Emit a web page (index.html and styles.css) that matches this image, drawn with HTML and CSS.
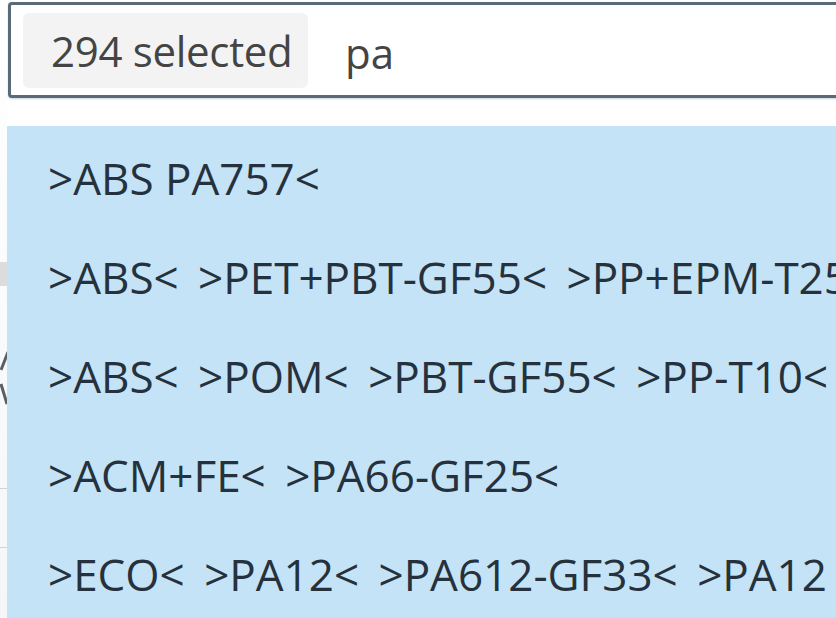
FILE: index.html
```html
<!DOCTYPE html>
<html>
<head>
<meta charset="utf-8">
<link rel="stylesheet" href="styles.css">
</head>
<body>
<div class="page">
  <div class="gutter">
    <div class="g-block"></div>
    <div class="g-chevron">
      <svg width="8" height="60" viewBox="0 0 8 60"><path d="M8 4 L1 22 M1 36 L7 56" stroke="#5a6068" stroke-width="3" fill="none"/></svg>
    </div>
    <div class="g-line g-line1"></div>
    <div class="g-line g-line2"></div>
  </div>
  <div class="main">
    <div class="field">
      <span class="chip">294 selected</span>
      <span class="query">pa</span>
    </div>
    <ul class="dropdown">
      <li class="opt opt-single">&gt;ABS PA757&lt;</li>
      <li class="opt">&gt;ABS&lt; &gt;PET+PBT-GF55&lt; &gt;PP+EPM-T25&lt;</li>
      <li class="opt">&gt;ABS&lt; &gt;POM&lt; &gt;PBT-GF55&lt; &gt;PP-T10&lt;</li>
      <li class="opt">&gt;ACM+FE&lt; &gt;PA66-GF25&lt;</li>
      <li class="opt">&gt;ECO&lt; &gt;PA12&lt; &gt;PA612-GF33&lt; &gt;PA12 PA&lt;</li>
    </ul>
  </div>
</div>
</body>
</html>
```

FILE: styles.css
```css
html, body {
  margin: 0;
  padding: 0;
  background: #ffffff;
  overflow: hidden;
  width: 836px;
  height: 618px;
}

.page {
  display: flex;
  width: 836px;
  height: 618px;
  overflow: hidden;
  font-family: "Open Sans", "Noto Sans", sans-serif;
}

.gutter {
  width: 7px;
  flex: 0 0 7px;
  display: flex;
  flex-direction: column;
  background: linear-gradient(#ffffff, #f4f6f8);
}

.g-block {
  margin-top: 262px;
  height: 24px;
  background: #dcdcdc;
}

.g-chevron {
  margin-top: 62px;
  height: 60px;
}

.g-line {
  height: 1px;
  background: #cfd4d8;
}

.g-line1 { margin-top: 80px; }
.g-line2 { margin-top: 58px; }

.main {
  flex: 1 0 auto;
  width: 900px;
  display: flex;
  flex-direction: column;
  overflow: hidden;
}

.field {
  flex: 0 0 auto;
  box-sizing: border-box;
  margin: 2px 0 0 1px;
  height: 96px;
  border: 3px solid #5b6a78;
  border-right: none;
  border-radius: 4px 0 0 4px;
  display: flex;
  align-items: center;
  padding-left: 12px;
  background: #ffffff;
  box-shadow: 0 1px 2px rgba(90, 110, 130, 0.3);
}

.chip {
  display: flex;
  align-items: center;
  box-sizing: border-box;
  height: 75px;
  width: 285px;
  padding-left: 28px;
  background: #f3f3f3;
  border-radius: 6px;
  color: #444444;
  font-size: 42px;
  letter-spacing: -0.3px;
}

.query {
  margin-left: 37px;
  font-size: 42px;
  color: #444444;
  padding-top: 4px;
}

.dropdown {
  flex: 0 0 auto;
  height: 520px;
  list-style: none;
  margin: 28px 0 0 0;
  padding: 30px 0 0 0;
  background: #c5e3f6;
}

.opt {
  height: 99px;
  padding-left: 41px;
  font-size: 44px;
  line-height: 44px;
  color: #25323d;
  white-space: nowrap;
  word-spacing: 8px;
}

.opt-single {
  word-spacing: 0;
}
```
